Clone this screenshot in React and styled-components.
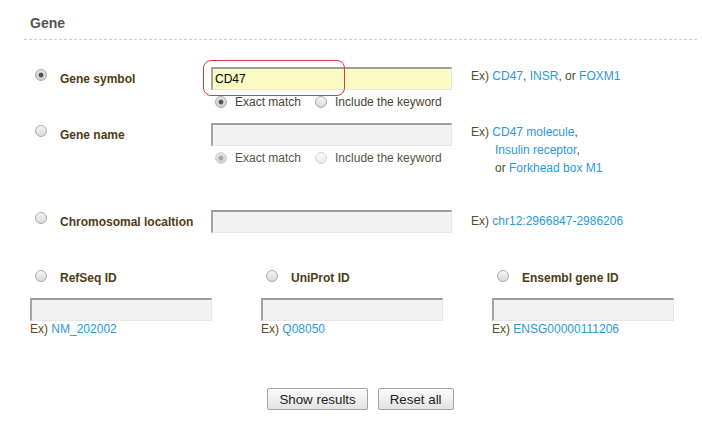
import React from "react";
import styled, { createGlobalStyle } from "styled-components";

const GlobalStyle = createGlobalStyle`
  body {
    margin: 0;
    background: #ffffff;
    font-family: "Liberation Sans", Arial, sans-serif;
  }
`;

const Section = styled.div`
  width: 673px;
  margin-left: 24px;
`;

const Heading = styled.h3`
  margin: 0;
  padding: 14px 0 7px 6px;
  font-size: 14px;
  line-height: 18px;
  font-weight: bold;
  color: #555555;
  border-bottom: 1px dashed #cccccc;
`;

const FieldRow = styled.div`
  display: grid;
  grid-template-columns: 187px 241px 1fr;
  align-items: start;
  margin-top: ${(p) => p.$top}px;
`;

const LabelCell = styled.div`
  display: flex;
  align-items: flex-start;
  gap: 13px;
  padding-left: 11px;
`;

const Radio = styled.span`
  display: inline-block;
  flex: none;
  width: 12px;
  height: 12px;
  box-sizing: border-box;
  margin-top: ${(p) => (p.$top !== undefined ? p.$top : 2)}px;
  border-radius: 50%;
  border: 1px solid ${(p) => (p.$disabled ? "#d4d4d4" : "#a9a9a9")};
  background: ${(p) =>
    p.$checked
      ? `radial-gradient(circle, ${p.$disabled ? "#a8a8a8" : "#555555"} 0 2px, transparent 2.8px), linear-gradient(#e4e4e4, #cfcfcf)`
      : p.$disabled
      ? "linear-gradient(#fafafa, #ececec)"
      : "linear-gradient(#f6f6f6, #d9d9d9)"};
`;

const FieldLabel = styled.span`
  padding-top: 4px;
  font-size: 12px;
  line-height: 16px;
  font-weight: bold;
  color: #4e3b16;
  white-space: nowrap;
`;

const InputCell = styled.div`
  position: relative;
`;

const Highlight = styled.div`
  position: absolute;
  left: -8px;
  top: -7px;
  width: 142px;
  height: 36px;
  box-sizing: border-box;
  border: 1.5px solid #e0383a;
  border-radius: 8px;
  pointer-events: none;
`;

const TextBox = styled.input`
  display: block;
  box-sizing: border-box;
  width: ${(p) => p.$width || 241}px;
  height: 23px;
  margin: 0;
  padding: 0 2px;
  font-family: "Liberation Sans", Arial, sans-serif;
  font-size: 12px;
  color: #000000;
  background: ${(p) => (p.$active ? "#fbfbc2" : "#f2f2f2")};
  border-style: solid;
  border-width: 2px 1px 1px 2px;
  border-color: #9c9c9c #e6e6e6 #e6e6e6 #a4a4a4;
  outline: none;
`;

const Options = styled.div`
  display: flex;
  align-items: flex-start;
  margin: 4px 0 0 4px;
  font-size: 12px;
  line-height: 16px;
  color: ${(p) => (p.$disabled ? "#5a5446" : "#4b4332")};
`;

const Option = styled.label`
  display: flex;
  align-items: flex-start;
  gap: 8px;
  margin-right: 14px;
  white-space: nowrap;
`;

const Example = styled.div`
  font-size: 12px;
  line-height: 18px;
  color: #5a4a26;
  padding-left: 19px;
  padding-top: ${(p) => p.$pad || 0}px;
`;

const Indent = styled.div`
  padding-left: 24px;
`;

const Link = styled.a`
  color: #2b98d8;
  text-decoration: none;
  cursor: pointer;
`;

const IdRow = styled.div`
  display: grid;
  grid-template-columns: repeat(3, 231px);
  margin-top: 37px;
  padding-left: 6px;
`;

const IdColumn = styled.div`
  display: flex;
  flex-direction: column;
`;

const IdHeader = styled.div`
  display: flex;
  align-items: flex-start;
  gap: 13px;
  padding-left: 5px;
  margin-bottom: 12px;
`;

const IdLabel = styled(FieldLabel)`
  padding-top: 0;
`;

const IdExample = styled(Example)`
  padding-left: 0;
  line-height: 16px;
`;

const Buttons = styled.div`
  display: flex;
  justify-content: center;
  gap: 10px;
  margin-top: 51px;
`;

const Button = styled.button`
  height: 22px;
  padding: 0 11px;
  font-family: "Liberation Sans", Arial, sans-serif;
  font-size: 13.33px;
  color: #222222;
  background: linear-gradient(#fbfbfb, #e3e3e3);
  border: 1px solid #a3a3a3;
  border-radius: 2px;
  cursor: pointer;
`;

const ids = [
  { label: "RefSeq ID", example: "NM_202002" },
  { label: "UniProt ID", example: "Q08050" },
  { label: "Ensembl gene ID", example: "ENSG00000111206" },
];

function MatchOptions({ disabled }) {
  return (
    <Options $disabled={disabled}>
      <Option>
        <Radio $checked $disabled={disabled} />
        Exact match
      </Option>
      <Option>
        <Radio $disabled={disabled} />
        Include the keyword
      </Option>
    </Options>
  );
}

export default function App() {
  return (
    <>
      <GlobalStyle />
      <Section>
        <Heading>Gene</Heading>

        <FieldRow $top={27}>
          <LabelCell>
            <Radio $checked />
            <FieldLabel>Gene symbol</FieldLabel>
          </LabelCell>
          <InputCell>
            <Highlight />
            <TextBox $active defaultValue="CD47" />
            <MatchOptions />
          </InputCell>
          <Example>
            Ex) <Link>CD47</Link>, <Link>INSR</Link>, or <Link>FOXM1</Link>
          </Example>
        </FieldRow>

        <FieldRow $top={13}>
          <LabelCell>
            <Radio />
            <FieldLabel>Gene name</FieldLabel>
          </LabelCell>
          <InputCell>
            <TextBox />
            <MatchOptions disabled />
          </InputCell>
          <Example>
            Ex) <Link>CD47 molecule</Link>,
            <Indent>
              <Link>Insulin receptor</Link>,
            </Indent>
            <Indent>
              or <Link>Forkhead box M1</Link>
            </Indent>
          </Example>
        </FieldRow>

        <FieldRow $top={33}>
          <LabelCell>
            <Radio />
            <FieldLabel>Chromosomal localtion</FieldLabel>
          </LabelCell>
          <InputCell>
            <TextBox />
          </InputCell>
          <Example $pad={2}>
            Ex) <Link>chr12:2966847-2986206</Link>
          </Example>
        </FieldRow>

        <IdRow>
          {ids.map((id) => (
            <IdColumn key={id.label}>
              <IdHeader>
                <Radio $top={0} />
                <IdLabel>{id.label}</IdLabel>
              </IdHeader>
              <TextBox $width={182} />
              <IdExample>
                Ex) <Link>{id.example}</Link>
              </IdExample>
            </IdColumn>
          ))}
        </IdRow>

        <Buttons>
          <Button>Show results</Button>
          <Button>Reset all</Button>
        </Buttons>
      </Section>
    </>
  );
}
